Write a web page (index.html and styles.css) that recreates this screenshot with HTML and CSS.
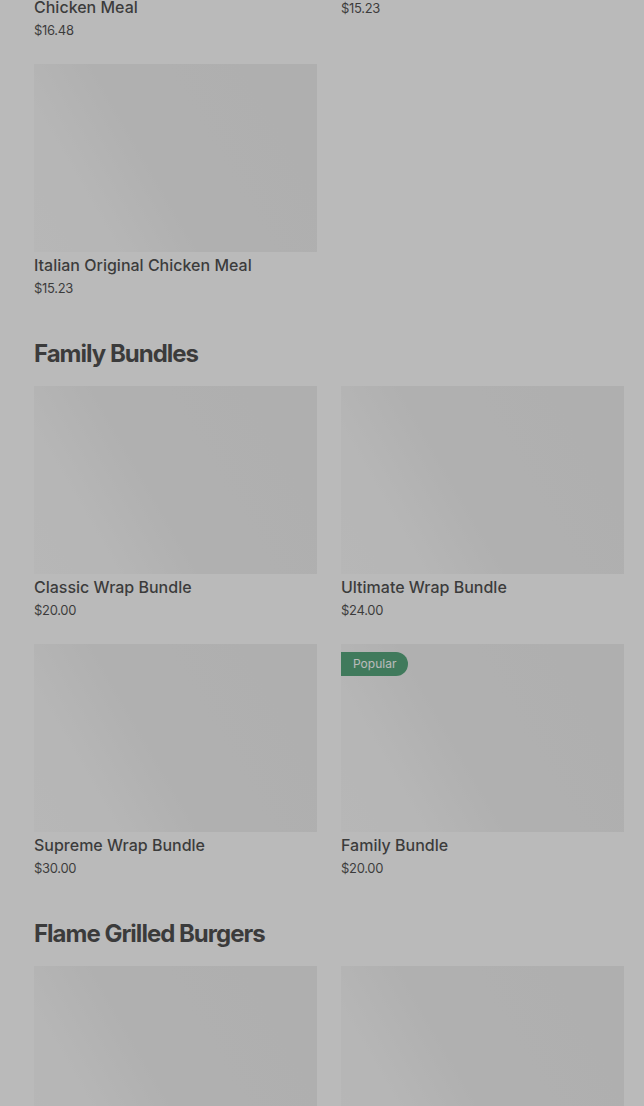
FILE: index.html
```html
<!DOCTYPE html>
<html lang="en">
<head>
    <meta charset="UTF-8">
    <meta name="viewport" content="width=device-width, initial-scale=1.0">
    <title>Menu</title>
    <link rel="stylesheet" href="styles.css">
</head>
<body>

    <main class="menu">

        <!-- Chicken meals (scrolled part way) -->
        <section class="menu-section scrolled">
            <div class="item-grid">
                <div class="item">
                    <div class="item-image"></div>
                    <h3 class="item-name">Portuguese Original Flame Grilled Chicken Meal</h3>
                    <p class="item-price">$16.48</p>
                </div>
                <div class="item">
                    <div class="item-image"></div>
                    <h3 class="item-name">Original Meal</h3>
                    <p class="item-price">$15.23</p>
                </div>
                <div class="item">
                    <div class="item-image"></div>
                    <h3 class="item-name">Italian Original Chicken Meal</h3>
                    <p class="item-price">$15.23</p>
                </div>
            </div>
        </section>

        <section class="menu-section">
            <h2 class="section-title">Family Bundles</h2>
            <div class="item-grid">
                <div class="item">
                    <div class="item-image"></div>
                    <h3 class="item-name">Classic Wrap Bundle</h3>
                    <p class="item-price">$20.00</p>
                </div>
                <div class="item">
                    <div class="item-image"></div>
                    <h3 class="item-name">Ultimate Wrap Bundle</h3>
                    <p class="item-price">$24.00</p>
                </div>
                <div class="item">
                    <div class="item-image"></div>
                    <h3 class="item-name">Supreme Wrap Bundle</h3>
                    <p class="item-price">$30.00</p>
                </div>
                <div class="item">
                    <div class="item-image">
                        <span class="badge">Popular</span>
                    </div>
                    <h3 class="item-name">Family Bundle</h3>
                    <p class="item-price">$20.00</p>
                </div>
            </div>
        </section>

        <section class="menu-section">
            <h2 class="section-title">Flame Grilled Burgers</h2>
            <div class="item-grid">
                <div class="item">
                    <div class="item-image"></div>
                    <h3 class="item-name">Classic Burger</h3>
                    <p class="item-price">$12.00</p>
                </div>
                <div class="item">
                    <div class="item-image"></div>
                    <h3 class="item-name">Double Burger</h3>
                    <p class="item-price">$15.00</p>
                </div>
            </div>
        </section>

    </main>

    <!-- modal backdrop -->
    <div class="backdrop"></div>

</body>
</html>
```

FILE: styles.css
```css
/* Basic styling */
body {
    font-family: Inter, "Noto Sans", sans-serif;
    margin: 0;
    padding: 0;
    background-color: #ffffff;
    color: #000000;
    overflow: hidden;
}
.menu {
    padding: 0 20px 0 34px;
}
.menu-section {
    margin-top: 40px;
}
.menu-section.scrolled {
    margin-top: -216px;
}
.section-title {
    margin: 0 0 16px;
    font-size: 24px;
    line-height: 32px;
    font-weight: 700;
    letter-spacing: -1px;
}
.item-grid {
    display: grid;
    grid-template-columns: 1fr 1fr;
    gap: 24px;
    align-items: start;
}
.item-image {
    position: relative;
    height: 188px;
    background: linear-gradient(60deg, #f8f8f8 0%, #f6f6f6 22%, #ebebeb 42%, #e8e8e8 100%);
}
.badge {
    position: absolute;
    top: 8px;
    left: 0;
    padding: 0 12px;
    height: 24px;
    line-height: 24px;
    font-size: 12px;
    color: #ffffff;
    background-color: #0a7e43;
    border-radius: 0 12px 12px 0;
}
.item-name {
    margin: 0;
    padding-top: 2px;
    font-size: 16px;
    line-height: 22px;
    font-weight: 500;
}
.item-price {
    margin: 2px 0 0;
    font-size: 13px;
    line-height: 20px;
    letter-spacing: -0.3px;
    color: #000000;
}
/* grey overlay over the page */
.backdrop {
    position: fixed;
    inset: 0;
    background-color: rgba(117, 117, 117, 0.5);
}
```
